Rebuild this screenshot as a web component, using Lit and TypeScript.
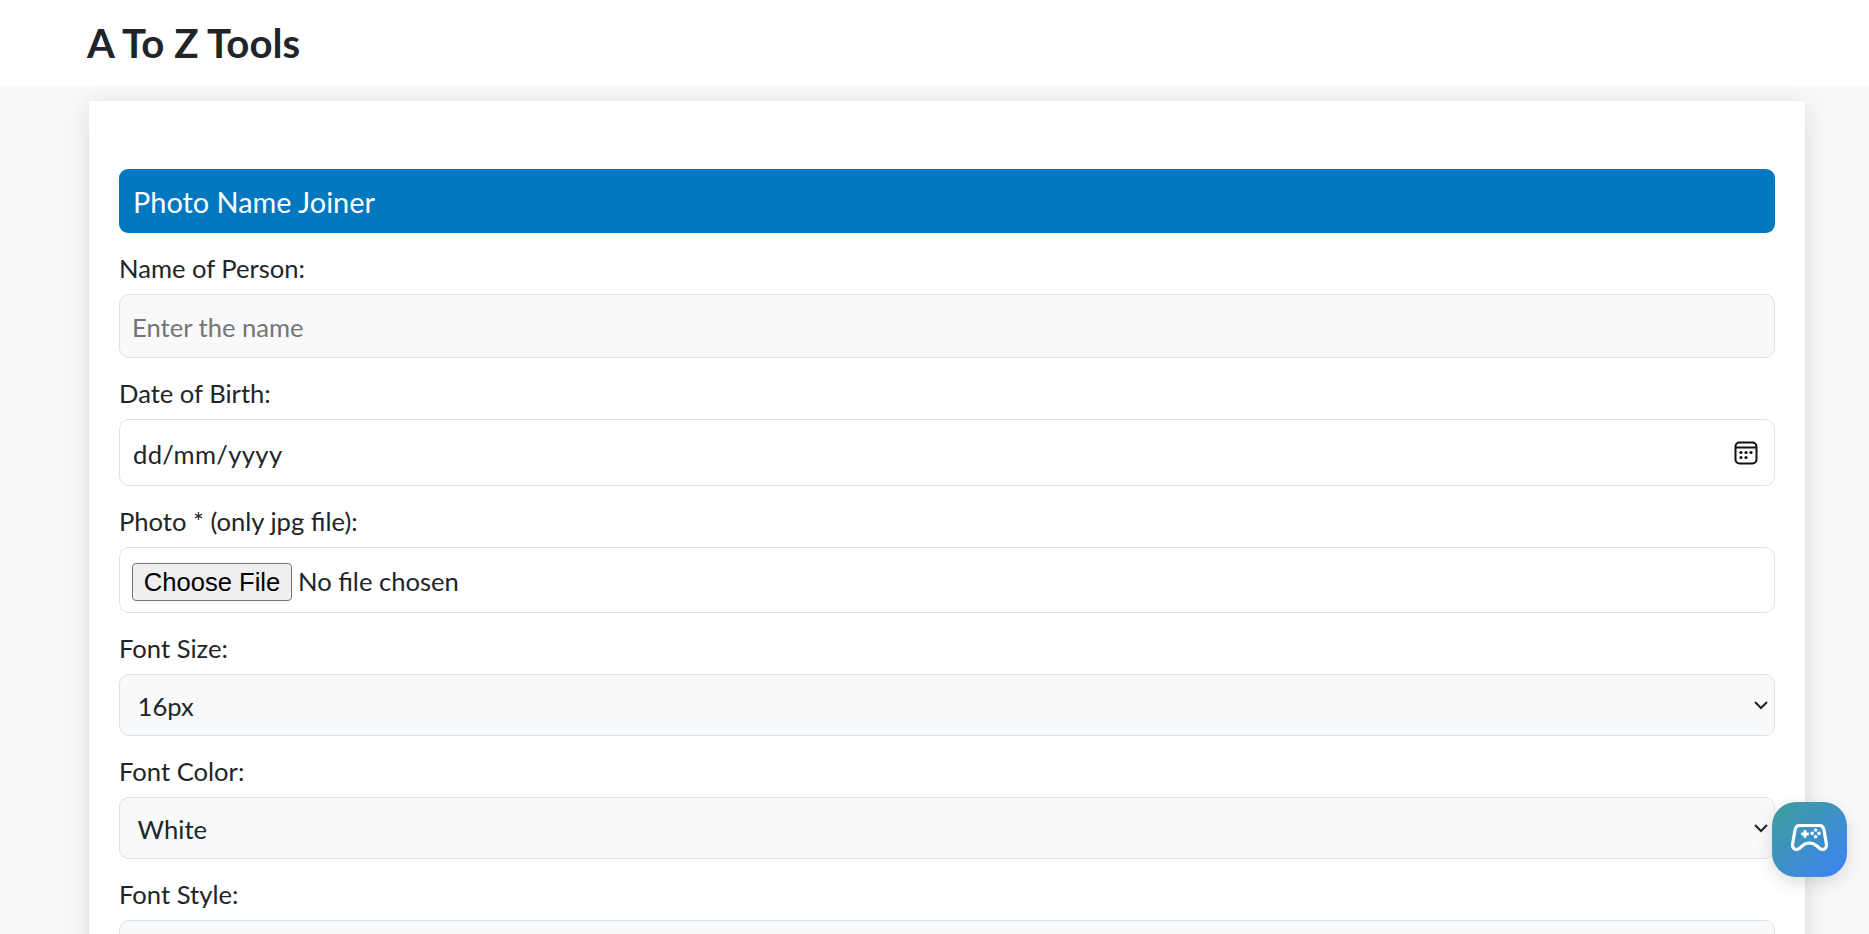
import { LitElement, html, css, unsafeCSS } from "lit";
import { customElement } from "lit/decorators.js";

const chevron = "url(\"data:image/svg+xml,%3csvg xmlns='http://www.w3.org/2000/svg' viewBox='0 0 16 10'%3e%3cpath fill='none' stroke='%23222' stroke-width='2' d='M2 2l6 6 6-6'/%3e%3c/svg%3e\")";

@customElement("app-root")
export class AppRoot extends LitElement {
  static styles = css`
    :host {
      display: block;
      height: 934px;
      overflow: hidden;
      background: #f8f9fa;
      color: #212529;
      font-family: "Lato", "Open Sans", sans-serif;
      font-size: 25.6px;
    }
    * { box-sizing: border-box; }
    .topbar {
      position: relative;
      z-index: 1;
      height: 86px;
      background: #fff;
      display: flex;
      align-items: center;
      padding: 0 0 2px 87px;
    }
    .brand {
      font-size: 40.2px;
      font-weight: 700;
      margin: 0;
      color: #212529;
    }
    .card {
      width: 1716px;
      margin: 15px 0 0 89px;
      padding: 68px 30px 0;
      background: #fff;
      box-shadow: 0 4px 24px rgba(0, 0, 0, 0.13);
      height: 900px;
    }
    .banner {
      margin: 0;
      height: 64px;
      border-radius: 9px;
      background: #0078c0;
      color: #fff;
      font-size: 28.9px;
      font-weight: 400;
      display: flex;
      align-items: center;
      padding-left: 14px;
    }
    .form { display: flex; flex-direction: column; }
    label {
      display: block;
      height: 61px;
      padding-top: 16.4px;
      line-height: 38px;
    }
    .control {
      display: block;
      width: 100%;
      border: 1.5px solid #dee2e6;
      border-radius: 10px;
      font: inherit;
      color: #212529;
      outline: none;
      padding: 2px 13px 0;
    }
    .muted { background: #f8f9fa; }
    .name { height: 64px; padding-left: 12px; }
    .name::placeholder { color: #757575; opacity: 1; }
    .datewrap {
      height: 67px;
      display: flex;
      align-items: center;
      padding: 0 16px 0 13px;
      background: #fff;
    }
    .datewrap input {
      flex: 1;
      border: 0;
      outline: 0;
      padding: 3px 0 0;
      font: inherit;
      letter-spacing: 0.35px;
      color: #212529;
      background: none;
    }
    .calendar { width: 24px; height: 24px; display: block; margin-top: 1px; }
    .file {
      height: 66px;
      background: #fff;
      padding: 15px 12px 0;
    }
    .file::file-selector-button {
      font-family: "Liberation Sans", Arial, sans-serif;
      font-size: 25.6px;
      height: 38px;
      width: 160px;
      padding: 0;
      margin-right: 6px;
      background: #efefef;
      border: 1.5px solid #767676;
      border-radius: 4px;
      color: #000;
    }
    select.control {
      height: 62px;
      appearance: none;
      -webkit-appearance: none;
      padding-left: 17.6px;
      background-color: #f8f9fa;
      background-image: ${unsafeCSS(chevron)};
      background-repeat: no-repeat;
      background-position: right 5px center;
      background-size: 16px 10px;
    }
    .fab {
      position: fixed;
      z-index: 2;
      left: 1772px;
      top: 802px;
      width: 75px;
      height: 75px;
      border: 0;
      padding: 0 0 5px;
      border-radius: 24px;
      background: linear-gradient(135deg, #3f9f97, #3b82f6);
      box-shadow: 0 6px 18px rgba(0, 0, 0, 0.13);
      display: flex;
      align-items: center;
      justify-content: center;
    }
    .fab svg { width: 37px; height: 27px; display: block; }
  `;

  render() {
    return html`
      <header class="topbar"><h1 class="brand">A To Z Tools</h1></header>
      <main class="card">
        <h2 class="banner">Photo Name Joiner</h2>
        <form class="form">
          <label for="n">Name of Person:</label>
          <input id="n" class="control muted name" type="text" placeholder="Enter the name" />
          <label for="d">Date of Birth:</label>
          <div class="control datewrap">
            <input id="d" type="text" value="dd/mm/yyyy" />
            <svg class="calendar" viewBox="0 0 24 24" fill="none" stroke="#111" stroke-width="2">
              <rect x="1.5" y="1.5" width="21" height="21" rx="4"></rect>
              <path d="M1.5 6.5h21"></path>
              <g fill="#111" stroke="none">
                <circle cx="7" cy="11.5" r="1.6"></circle>
                <circle cx="12" cy="11.5" r="1.6"></circle>
                <circle cx="17" cy="11.5" r="1.6"></circle>
                <circle cx="7" cy="16.5" r="1.6"></circle>
                <circle cx="12" cy="16.5" r="1.6"></circle>
              </g>
            </svg>
          </div>
          <label for="p">Photo * (only jpg file):</label>
          <input id="p" class="control file" type="file" />
          <label for="s">Font Size:</label>
          <select id="s" class="control"><option>16px</option></select>
          <label for="c">Font Color:</label>
          <select id="c" class="control"><option>White</option></select>
          <label for="t">Font Style:</label>
          <select id="t" class="control"><option>Normal</option></select>
        </form>
      </main>
      <button class="fab" aria-label="Games">
        <svg viewBox="0 0 37 27" fill="none" stroke="#fff" stroke-width="3.2" stroke-linejoin="round">
          <path d="M9 1.5H28C31 1.5 32.5 3.5 33 6L35.4 20C36 23.5 34 25.5 31.5 25.5C29.5 25.5 28 24 26.5 22.5C24.5 20.5 22 19 18.5 19C15 19 12.5 20.5 10.5 22.5C9 24 7.5 25.5 5.5 25.5C3 25.5 1 23.5 1.6 20L4 6C4.5 3.5 6 1.5 9 1.5Z"></path>
          <path d="M10.2 10H17.8M14 6.2V13.8" stroke-width="2.8"></path>
          <g fill="#fff" stroke="none">
            <circle cx="24.6" cy="6" r="1.8"></circle>
            <circle cx="24.6" cy="12.8" r="1.8"></circle>
            <circle cx="21.2" cy="9.4" r="1.8"></circle>
            <circle cx="28" cy="9.4" r="1.8"></circle>
          </g>
        </svg>
      </button>
    `;
  }
}
